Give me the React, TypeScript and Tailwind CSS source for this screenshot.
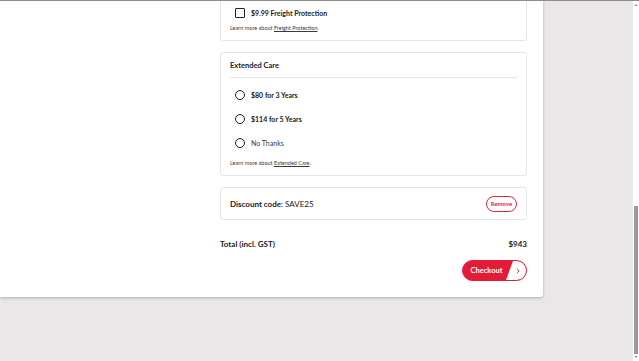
import { ChevronRight } from "lucide-react";

const font = { fontFamily: "Lato, 'Noto Sans', sans-serif" };

function Radio({ label, bold }: { label: string; bold?: boolean }) {
  return (
    <div className="flex h-[10px] items-center gap-[6px] pl-[5px]">
      <span className="size-[10px] rounded-full border-[1.5px] border-[#1f1f1f]" />
      <span className={bold ? "text-[7px] font-bold text-[#1a1a1a]" : "text-[7px] text-[#3a3a3a]"}>{label}</span>
    </div>
  );
}

function LearnMore({ topic }: { topic: string }) {
  return (
    <p className="text-[5.5px] leading-[8px] text-[#3a3a3a]">
      Learn more about <span className="underline">{topic}</span>.
    </p>
  );
}

export default function App() {
  return (
    <div className="flex h-[361px] w-[639px] overflow-hidden border-t border-[#8c8c8c] bg-[#e9e7e7]" style={font}>
      <div className="flex-1">
        <div className="flex w-[543px] flex-col rounded-br-[3px] bg-white pb-[16px] pl-[220px] pr-[16px] shadow-[0_1px_3px_rgba(0,0,0,0.25)]">
          {/* freight protection */}
          <div className="flex flex-col gap-[6px] rounded-b-[3px] border border-t-0 border-[#e6e6e6] px-[9px] pb-[8px] pt-[7px]">
            <div className="flex h-[10px] items-center gap-[6px] pl-[5px]">
              <span className="size-[10px] rounded-[1px] border-[1.5px] border-[#1f1f1f]" />
              <span className="text-[7px] font-bold text-[#1a1a1a]">$9.99 Freight Protection</span>
            </div>
            <LearnMore topic="Freight Protection" />
          </div>

          {/* extended care */}
          <div className="mt-[11px] flex flex-col rounded-[3px] border border-[#e6e6e6] px-[9px] pb-[8px] pt-[8px]">
            <h3 className="border-b border-[#e6e6e6] pb-[6px] text-[7.5px] font-bold leading-[10px] text-[#1a1a1a]">Extended Care</h3>
            <div className="flex flex-col gap-[14px] pt-[12px]">
              <Radio label="$80 for 3 Years" bold />
              <Radio label="$114 for 5 Years" bold />
              <Radio label="No Thanks" />
            </div>
            <div className="pt-[11px]">
              <LearnMore topic="Extended Care" />
            </div>
          </div>

          {/* discount */}
          <div className="mt-[11px] flex h-[33px] items-center justify-between rounded-[3px] border border-[#e6e6e6] px-[9px]">
            <p className="text-[8px] text-[#1a1a1a]">
              <span className="font-bold">Discount code</span>: SAVE25
            </p>
            <button className="flex h-[16px] w-[31px] items-center justify-center rounded-full border border-[#e0263f] text-[6px] font-bold text-[#e0263f]">
              Remove
            </button>
          </div>

          {/* total */}
          <div className="mt-[19px] flex items-center justify-between text-[8px] font-bold leading-[10px] text-[#1a1a1a]">
            <span>Total (incl. GST)</span>
            <span>$943</span>
          </div>

          <div className="mt-[11px] flex justify-end">
            <button className="flex h-[21px] w-[65px] overflow-hidden rounded-full border-[1.5px] border-[#e31b37] bg-[#e31b37]">
              <span className="flex flex-1 items-center justify-center pl-[4px] text-[7.5px] font-bold text-white">Checkout</span>
              <span className="flex w-[20px] items-center justify-center bg-white pl-[3px] text-[#e31b37] [clip-path:polygon(35%_0,100%_0,100%_100%,0_100%)]">
                <ChevronRight className="size-[8px]" strokeWidth={2.5} />
              </span>
            </button>
          </div>
        </div>
      </div>

      {/* scrollbar */}
      <div className="flex w-[6px] flex-col items-center bg-white">
        <span className="mt-[3px] h-0 w-0 border-x-[2px] border-b-[2px] border-x-transparent border-b-[#a0a0a0]" />
        <div className="h-[200px]" />
        <div className="h-[148px] w-[4px] bg-[#9a9a9a]" />
        <span className="mt-[2px] h-0 w-0 border-x-[2px] border-t-[2px] border-x-transparent border-t-[#a0a0a0]" />
      </div>
    </div>
  );
}
